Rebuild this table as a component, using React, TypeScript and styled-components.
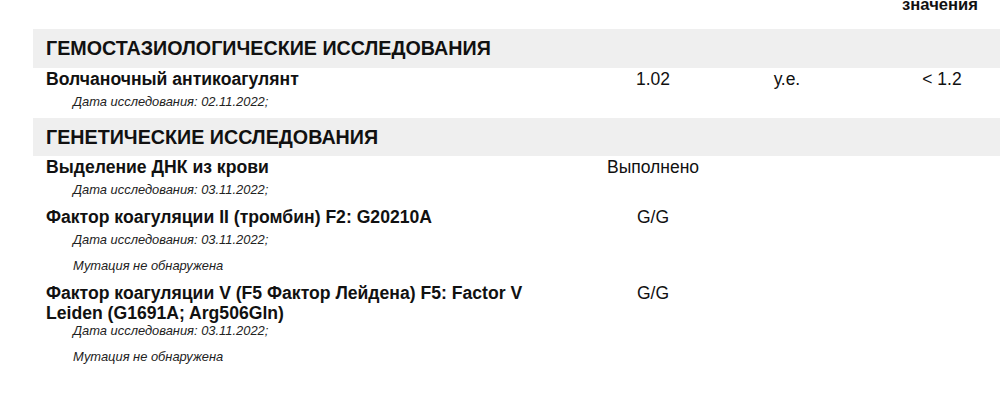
import React from "react";
import styled, { createGlobalStyle } from "styled-components";

const GlobalStyle = createGlobalStyle`
  html, body {
    margin: 0;
    padding: 0;
    background: #ffffff;
    overflow: hidden;
  }
  body {
    font-family: "Liberation Sans", Arial, sans-serif;
    color: #111111;
  }
`;

const COLUMNS = "524px 166px 102px 1fr";

const Page = styled.div`
  width: 1000px;
  height: 420px;
  padding-left: 33px;
  box-sizing: border-box;
`;

const HeaderRow = styled.div`
  display: grid;
  grid-template-columns: ${COLUMNS};
  padding-left: 13px;
  height: 29px;
`;

const HeaderCell = styled.div`
  grid-column: 4;
  margin-top: -5px;
  font-size: 16.6px;
  font-weight: 700;
  line-height: 20px;
  text-align: center;
  padding-left: 42px;
`;

const Band = styled.div<{ $h: number }>`
  background: #efefef;
  height: ${(p) => p.$h}px;
  display: flex;
  align-items: center;
  padding-left: 13px;
  font-size: 19.7px;
  font-weight: 700;
`;

const TestRow = styled.div`
  padding: 1px 0 8px 13px;
`;

const Main = styled.div`
  display: grid;
  grid-template-columns: ${COLUMNS};
  align-items: start;
`;

const Name = styled.div`
  font-size: 17.6px;
  font-weight: 700;
  line-height: 20px;
  min-height: 25px;
  padding-right: 40px;
`;

const Cell = styled.div<{ $pad?: number }>`
  font-size: 17.5px;
  line-height: 20px;
  text-align: center;
  padding-left: ${(p) => p.$pad ?? 0}px;
`;

const Note = styled.div`
  font-size: 12.9px;
  font-style: italic;
  line-height: 16px;
  color: #222222;
  padding-left: 27px;
  & + & {
    margin-top: 10px;
  }
`;

interface Test {
  name: string;
  value?: string;
  unit?: string;
  ref?: string;
  date: string;
  remark?: string;
}

interface Section {
  title: string;
  height: number;
  tests: Test[];
}

const sections: Section[] = [
  {
    title: "ГЕМОСТАЗИОЛОГИЧЕСКИЕ ИССЛЕДОВАНИЯ",
    height: 39,
    tests: [
      { name: "Волчаночный антикоагулянт", value: "1.02", unit: "у.е.", ref: "< 1.2", date: "02.11.2022" },
    ],
  },
  {
    title: "ГЕНЕТИЧЕСКИЕ ИССЛЕДОВАНИЯ",
    height: 38,
    tests: [
      { name: "Выделение ДНК из крови", value: "Выполнено", date: "03.11.2022" },
      {
        name: "Фактор коагуляции II (тромбин) F2: G20210A",
        value: "G/G",
        date: "03.11.2022",
        remark: "Мутация не обнаружена",
      },
      {
        name: "Фактор коагуляции V (F5 Фактор Лейдена) F5: Factor V Leiden (G1691A; Arg506Gln)",
        value: "G/G",
        date: "03.11.2022",
        remark: "Мутация не обнаружена",
      },
    ],
  },
];

const TestItem: React.FC<{ test: Test }> = ({ test }) => (
  <TestRow>
    <Main>
      <Name>{test.name}</Name>
      <Cell>{test.value}</Cell>
      <Cell>{test.unit}</Cell>
      <Cell $pad={46}>{test.ref}</Cell>
    </Main>
    <Note>Дата исследования: {test.date};</Note>
    {test.remark && <Note>{test.remark}</Note>}
  </TestRow>
);

export default function App() {
  return (
    <>
      <GlobalStyle />
      <Page>
        <HeaderRow>
          <HeaderCell>значения</HeaderCell>
        </HeaderRow>
        {sections.map((s) => (
          <React.Fragment key={s.title}>
            <Band $h={s.height}>{s.title}</Band>
            {s.tests.map((t) => (
              <TestItem key={t.name} test={t} />
            ))}
          </React.Fragment>
        ))}
      </Page>
    </>
  );
}
